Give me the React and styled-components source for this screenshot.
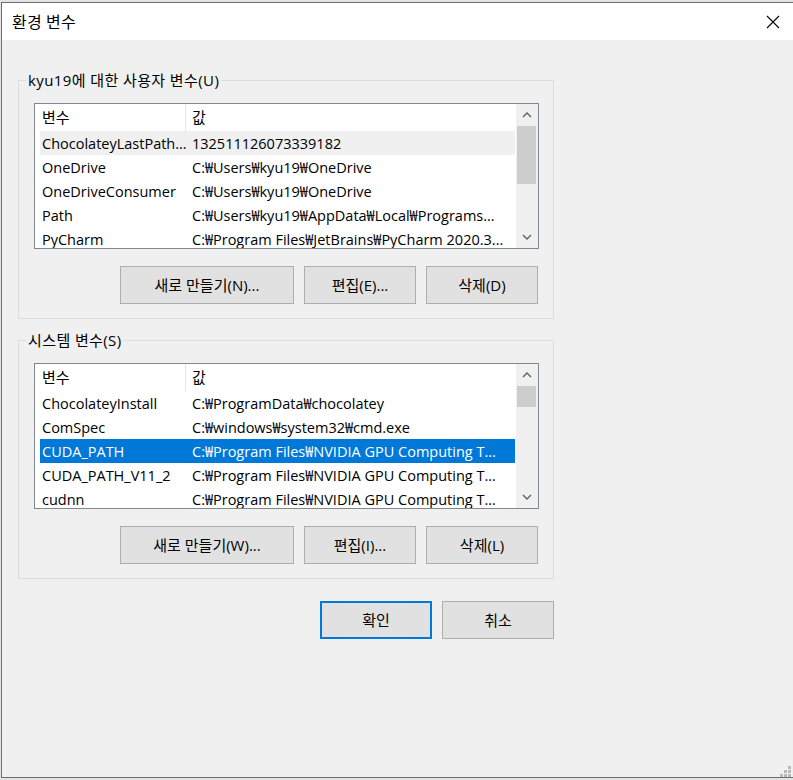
import { createGlobalStyle } from 'styled-components';
import styled from 'styled-components';

const GlobalStyle = createGlobalStyle`
  html, body {
    margin: 0;
    padding: 0;
    background: #e4e4e4;
    overflow: hidden;
  }
  body {
    font-family: "Open Sans", "Noto Sans CJK KR", sans-serif;
    color: #000;
  }
`;

const StyledWindow = styled.div`
  position: relative;
  margin: 2px 0 0 1px;
  width: 792px;
  height: 774px;
  border: 1px solid #6e6e6e;
  border-right: none;
  background: #f0f0f0;
  display: flex;
  flex-direction: column;
`;

const TitleBar = styled.div`
  height: 37px;
  flex: none;
  background: #fff;
  display: flex;
  align-items: center;
  padding-left: 10px;
  .title {
    font-family: "Noto Sans CJK KR", sans-serif;
    font-size: 16px;
    letter-spacing: 0.3px;
    line-height: 20px;
    margin-top: -1px;
  }
`;

const CloseButton = styled.div`
  margin-left: auto;
  width: 42px;
  height: 37px;
  display: flex;
  align-items: center;
  justify-content: center;
`;

const Body = styled.div`
  flex: 1;
  display: flex;
  flex-direction: column;
  align-items: flex-start;
  padding: 40px 0 0 16px;
`;

const GroupBox = styled.div`
  position: relative;
  width: 536px;
  box-sizing: border-box;
  border: 1px solid #dcdcdc;
  padding: 22px 14px 14px 15px;
  margin-top: ${(p) => p.$gap || 0}px;
  .label {
    position: absolute;
    left: 7px;
    top: -11px;
    padding: 0 2px;
    background: #f0f0f0;
    font-size: 15px;
    letter-spacing: 0.4px;
    line-height: 20px;
    white-space: nowrap;
  }
`;

const ListBox = styled.div`
  width: 505px;
  height: 146px;
  box-sizing: border-box;
  border: 1px solid #828790;
  background: #fff;
  display: flex;
  overflow: hidden;
`;

const ListContent = styled.div`
  flex: 1;
  overflow: hidden;
`;

const HeaderRow = styled.div`
  height: 27px;
  display: flex;
  font-size: 15px;
  line-height: 27px;
  .name {
    width: 143px;
    padding-left: 7px;
    border-right: 1px solid #e5e5e5;
  }
  .value {
    padding-left: 6px;
  }
`;

const Row = styled.div`
  height: 24px;
  margin-left: 5px;
  width: 475px;
  display: flex;
  font-size: 14.5px;
  line-height: 26px;
  white-space: nowrap;
  background: ${(p) => (p.$state === 'selected' ? '#0078d7' : p.$state === 'hover' ? '#f0f0f0' : 'transparent')};
  color: ${(p) => (p.$state === 'selected' ? '#fff' : '#000')};
  .name {
    width: 144px;
    padding-left: 2px;
    overflow: hidden;
  }
  .value {
    flex: 1;
    padding-left: 6px;
    overflow: hidden;
  }
`;

const ScrollBar = styled.div`
  width: 22px;
  flex: none;
  background: #f0f0f0;
  display: flex;
  flex-direction: column;
  .arrow {
    height: 22px;
    display: flex;
    align-items: center;
    justify-content: center;
  }
  .track {
    flex: 1;
    padding: 0 2px 0 1px;
  }
`;

const Thumb = styled.div`
  height: ${(p) => p.$size}px;
  background: #cdcdcd;
`;

const ButtonRow = styled.div`
  display: flex;
  justify-content: flex-end;
  gap: 10px;
  margin-top: 17px;
  width: 504px;
`;

const Button = styled.div`
  width: ${(p) => p.$w || 112}px;
  height: 38px;
  box-sizing: border-box;
  background: #e1e1e1;
  border: ${(p) => (p.$default ? '2px solid #0078d7' : '1px solid #adadad')};
  display: flex;
  align-items: center;
  justify-content: center;
  font-size: 15px;
  line-height: 20px;
  white-space: nowrap;
`;

const Footer = styled.div`
  width: 536px;
  display: flex;
  justify-content: flex-end;
  gap: 10px;
  margin-top: 22px;
`;

const Grip = styled.svg`
  position: absolute;
  right: 2px;
  bottom: 0;
`;

const Chevron = ({ up }) => (
  <svg width="10" height="6" viewBox="0 0 10 6">
    <polyline
      points={up ? '1,5 5,1 9,5' : '1,1 5,5 9,1'}
      fill="none"
      stroke="#606060"
      strokeWidth="1.4"
    />
  </svg>
);

const userVars = [
  ['ChocolateyLastPath...', '132511126073339182', 'hover'],
  ['OneDrive', 'C:₩Users₩kyu19₩OneDrive'],
  ['OneDriveConsumer', 'C:₩Users₩kyu19₩OneDrive'],
  ['Path', 'C:₩Users₩kyu19₩AppData₩Local₩Programs...'],
  ['PyCharm', 'C:₩Program Files₩JetBrains₩PyCharm 2020.3...'],
];

const systemVars = [
  ['ChocolateyInstall', 'C:₩ProgramData₩chocolatey'],
  ['ComSpec', 'C:₩windows₩system32₩cmd.exe'],
  ['CUDA_PATH', 'C:₩Program Files₩NVIDIA GPU Computing T...', 'selected'],
  ['CUDA_PATH_V11_2', 'C:₩Program Files₩NVIDIA GPU Computing T...'],
  ['cudnn', 'C:₩Program Files₩NVIDIA GPU Computing T...'],
];

const VarList = ({ rows, thumb }) => (
  <ListBox>
    <ListContent>
      <HeaderRow>
        <div className="name">변수</div>
        <div className="value">값</div>
      </HeaderRow>
      {rows.map(([name, value, state]) => (
        <Row key={name} $state={state}>
          <div className="name">{name}</div>
          <div className="value">{value}</div>
        </Row>
      ))}
    </ListContent>
    <ScrollBar>
      <div className="arrow">
        <Chevron up />
      </div>
      <div className="track">
        <Thumb $size={thumb} />
      </div>
      <div className="arrow">
        <Chevron />
      </div>
    </ScrollBar>
  </ListBox>
);

const Group = ({ label, rows, thumb, keys, gap }) => (
  <GroupBox $gap={gap}>
    <span className="label">{label}</span>
    <VarList rows={rows} thumb={thumb} />
    <ButtonRow>
      <Button $w={174}>새로 만들기({keys[0]})...</Button>
      <Button>편집({keys[1]})...</Button>
      <Button>삭제({keys[2]})</Button>
    </ButtonRow>
  </GroupBox>
);

export default function App() {
  return (
    <>
      <GlobalStyle />
      <StyledWindow>
        <TitleBar>
          <span className="title">환경 변수</span>
          <CloseButton>
            <svg width="14" height="14" viewBox="0 0 14 14">
              <path d="M1 1 L13 13 M13 1 L1 13" stroke="#000" strokeWidth="1.1" />
            </svg>
          </CloseButton>
        </TitleBar>
        <Body>
          <Group label="kyu19에 대한 사용자 변수(U)" rows={userVars} thumb={58} keys={['N', 'E', 'D']} />
          <Group label="시스템 변수(S)" rows={systemVars} thumb={21} keys={['W', 'I', 'L']} gap={21} />
          <Footer>
            <Button $default>확인</Button>
            <Button>취소</Button>
          </Footer>
        </Body>
        <Grip width="12" height="12" viewBox="0 0 12 12">
          {[
            [0, 9], [4, 9], [8, 9], [4, 5], [8, 5], [8, 1],
          ].map(([x, y]) => (
            <rect key={`${x}-${y}`} x={x} y={y} width="3" height="3" fill="#b9b9b9" />
          ))}
        </Grip>
      </StyledWindow>
    </>
  );
}
